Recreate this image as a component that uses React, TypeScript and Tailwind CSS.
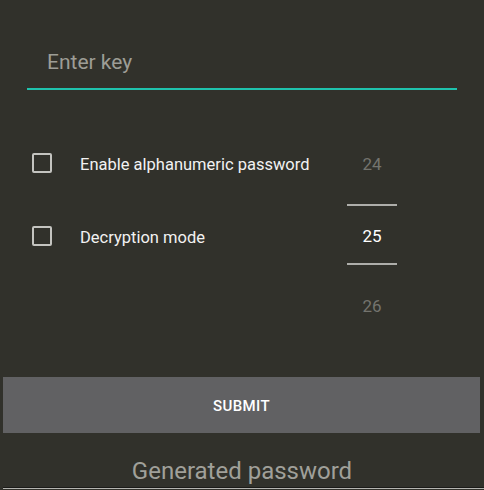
import React from "react";

export default function App() {
  return (
    <div
      className="w-[484px] h-[490px] bg-[#31312b] overflow-hidden flex flex-col relative"
      style={{ fontFamily: "Roboto, 'Noto Sans', sans-serif" }}
    >
      {/* Key input */}
      <div className="mx-[27px] mt-[47px] w-[430px]">
        <div className="pl-[20px] h-[28px] text-[21px] leading-[30px] text-[#9d9d96]">Enter key</div>
        <div className="mt-[13px] h-[2px] bg-[#1fc2ad]" />
      </div>

      {/* Options + picker */}
      <div className="mt-[40px] flex">
        <div className="pl-[32px] pt-[23px] flex flex-col w-[347px]">
          <div className="flex items-center h-[20px]">
            <div className="w-[20px] h-[20px] border-2 border-[#c4c4c0] rounded-[2px]" />
            <div className="ml-[28px] mt-[3px] text-[16.5px] leading-[20px] text-[#f2f2f2]">Enable alphanumeric password</div>
          </div>
          <div className="flex items-center h-[20px] mt-[53px]">
            <div className="w-[20px] h-[20px] border-2 border-[#c4c4c0] rounded-[2px]" />
            <div className="ml-[28px] mt-[3px] text-[16.5px] leading-[20px] text-[#f2f2f2]">Decryption mode</div>
          </div>
        </div>
        <div className="w-[50px] flex flex-col items-stretch">
          <div className="mt-[24px] h-[20px] leading-[20px] text-[17px] text-center text-[#74746e]">24</div>
          <div className="mt-[30px] h-[2px] bg-[#aeaeaa]" />
          <div className="mt-[20px] h-[20px] leading-[20px] text-[17px] text-center text-white">25</div>
          <div className="mt-[17px] h-[2px] bg-[#aeaeaa]" />
          <div className="mt-[31px] h-[20px] leading-[20px] text-[17px] text-center text-[#74746e]">26</div>
        </div>
      </div>

      {/* Submit */}
      <div className="mt-[61px] ml-[3px] w-[477px] h-[56px] bg-[#616163] flex items-center justify-center">
        <span className="mt-[2px] text-[15px] font-medium tracking-[0.4px] text-white">SUBMIT</span>
      </div>

      {/* Generated password */}
      <div className="mt-[23px] text-center text-[24px] leading-[30px] text-[#a0a09a]">Generated password</div>
      <div className="absolute left-[3px] right-0 bottom-[1px] h-[2px] bg-[#b4b4b0] border-t border-[#1a1a18]" />
    </div>
  );
}
